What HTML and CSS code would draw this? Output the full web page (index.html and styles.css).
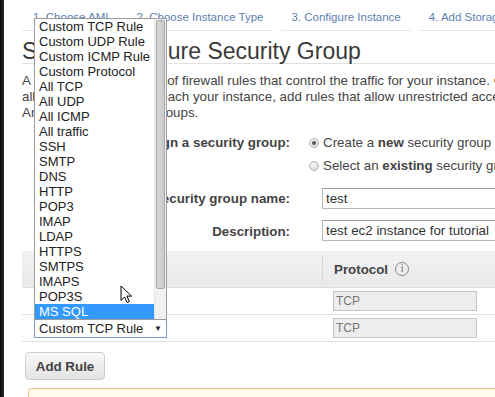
FILE: index.html
```html
<!DOCTYPE html>
<html>
<head>
  <meta charset="utf-8">
  <title>Step 6: Configure Security Group</title>
  <link rel="stylesheet" href="styles.css">
</head>
<body>
  <div class="screen">
    <div class="edge"></div>
    <div class="page">
      <ul class="steps">
        <li>1. Choose AMI</li>
        <li>2. Choose Instance Type</li>
        <li>3. Configure Instance</li>
        <li>4. Add Storage</li>
        <li>5. Tag Instance</li>
      </ul>

      <h1>Step 6: Configure Security Group</h1>

      <p class="intro">
        <span>A security group is a set of firewall rules that control the traffic for your instance. On this page, you can add rules to allow specific traffic to reach your instance. For example, if you want to set up a web server and</span>
        <span>allow Internet traffic to reach your instance, add rules that allow unrestricted access to the HTTP and HTTPS ports. You can create a new security group or select from an existing one below.</span>
        <span>Amazon EC2 security groups.</span>
      </p>

      <div class="form">
        <div class="label top">Assign a security group:</div>
        <div class="radios">
          <div class="radio"><span class="dot checked"></span><span>Create a <b>new</b> security group</span></div>
          <div class="radio"><span class="dot"></span><span>Select an <b>existing</b> security group</span></div>
        </div>
        <div class="label">Security group name:</div>
        <div class="text">test</div>
        <div class="label">Description:</div>
        <div class="text">test ec2 instance for tutorial</div>
      </div>

      <div class="rules">
        <div class="row head">
          <div class="cell type">Type</div>
          <div class="cell proto">Protocol <span class="info">i</span></div>
        </div>
        <div class="row">
          <div class="cell type"><div class="select">Custom TCP Rule<span class="arrow">&#9660;</span></div></div>
          <div class="cell proto"><div class="ro">TCP</div></div>
        </div>
        <div class="row">
          <div class="cell type">
            <div class="select">Custom TCP Rule<span class="arrow">&#9660;</span>
              <div class="list">
                <div class="opts">
                  <div class="opt">Custom TCP Rule</div>
                  <div class="opt">Custom UDP Rule</div>
                  <div class="opt">Custom ICMP Rule</div>
                  <div class="opt">Custom Protocol</div>
                  <div class="opt">All TCP</div>
                  <div class="opt">All UDP</div>
                  <div class="opt">All ICMP</div>
                  <div class="opt">All traffic</div>
                  <div class="opt">SSH</div>
                  <div class="opt">SMTP</div>
                  <div class="opt">DNS</div>
                  <div class="opt">HTTP</div>
                  <div class="opt">POP3</div>
                  <div class="opt">IMAP</div>
                  <div class="opt">LDAP</div>
                  <div class="opt">HTTPS</div>
                  <div class="opt">SMTPS</div>
                  <div class="opt">IMAPS</div>
                  <div class="opt">POP3S</div>
                  <div class="opt selected">MS SQL</div>
                </div>
                <div class="scroll"><div class="thumb"></div></div>
              </div>
            </div>
          </div>
          <div class="cell proto"><div class="ro">TCP</div></div>
        </div>
      </div>

      <button class="add">Add Rule</button>
      <div class="warning"></div>
    </div>

    <svg class="cursor" width="13" height="19" viewBox="0 0 13 19">
      <path d="M1 1 L1 15.5 L4.6 12 L7.2 17.6 L9.4 16.6 L6.9 11.1 L11.6 11.1 Z" fill="#fff" stroke="#000" stroke-width="1" stroke-linejoin="round"/>
    </svg>
  </div>
</body>
</html>
```

FILE: styles.css
```css
html, body {
  margin: 0;
  padding: 0;
}

body {
  background: #fff;
  color: #444;
  font-family: "Liberation Sans", Arial, sans-serif;
  font-size: 13.33px;
  overflow: hidden;
}

* {
  box-sizing: border-box;
}

.screen {
  display: flex;
  height: 397px;
  position: relative;
  width: 495px;
}

.edge {
  background: linear-gradient(to right, #0c0c0c, #2a2a2a);
  flex: 0 0 4px;
}

.page {
  flex: 1;
  overflow: hidden;
  padding-left: 18px;
}

.steps {
  display: flex;
  list-style: none;
  margin: 0;
  padding: 0;
  white-space: nowrap;
}

.steps li {
  border-bottom: 1px solid #e6e6e6;
  color: #5d80b0;
  font-size: 11.5px;
  line-height: 13px;
  margin-right: 8px;
  padding: 11px 10px 6px 10px;
}

.steps li:first-child {
  padding-left: 11px;
}

h1 {
  border-bottom: 1px solid #e2e2e2;
  color: #3a3a3a;
  font-size: 23px;
  font-weight: normal;
  line-height: 23px;
  margin: 9px 0 0;
  white-space: nowrap;
}

.intro {
  line-height: 16px;
  margin: 9px 0 0;
  white-space: nowrap;
}

.intro span {
  display: block;
}

.form {
  align-items: center;
  display: grid;
  grid-template-columns: 268px 1fr;
  column-gap: 19px;
  margin-top: 10px;
  row-gap: 11px;
}

.label {
  font-weight: bold;
  text-align: right;
  white-space: nowrap;
}

.label.top {
  align-self: start;
  line-height: 23px;
}

.radio {
  align-items: center;
  display: flex;
  height: 23px;
  white-space: nowrap;
}

.dot {
  background: radial-gradient(circle at 40% 35%, #fafafa, #cfcfcf);
  border: 1px solid #b5b5b5;
  border-radius: 50%;
  flex: 0 0 10px;
  height: 10px;
  margin-right: 4px;
  position: relative;
}

.dot.checked::after {
  background: #555;
  border-radius: 50%;
  content: "";
  height: 4px;
  left: 2px;
  position: absolute;
  top: 2px;
  width: 4px;
}

.text {
  border: 1px solid #b9b9b9;
  border-top-color: #9a9a9a;
  color: #333;
  height: 21px;
  line-height: 19px;
  margin-left: 13px;
  padding: 0 3px;
  white-space: nowrap;
  width: 260px;
}

.form .text + .label {
  margin-top: 1px;
}

.rules {
  margin-top: 10px;
  width: 700px;
}

.row {
  border-bottom: 1px solid #e3e3e3;
  display: flex;
  height: 27px;
}

.row.head {
  background: linear-gradient(#f2f2f2, #e9e9e9);
  border-bottom-color: #dcdcdc;
  font-weight: bold;
  height: 37px;
}

.cell {
  align-items: center;
  display: flex;
}

.cell.type {
  padding-left: 12px;
  width: 300px;
}

.cell.proto {
  padding-left: 11px;
  width: 170px;
}

.row.head .cell.proto {
  border-left: 1px solid #d6d6d6;
  margin: 5px 0;
}

.info {
  border: 1px solid #888;
  border-radius: 50%;
  color: #666;
  font-size: 10px;
  font-weight: normal;
  height: 14px;
  line-height: 12px;
  margin-left: 7px;
  text-align: center;
  width: 14px;
}

.ro {
  background: #ededed;
  border: 1px solid #c6c6c6;
  color: #777;
  font-size: 12px;
  height: 20px;
  line-height: 18px;
  padding-left: 2px;
  width: 144px;
}

.select {
  background: #fff;
  border: 1px solid #7d9bd0;
  color: #222;
  font-size: 13px;
  height: 19px;
  line-height: 17px;
  padding-left: 4px;
  position: relative;
  white-space: nowrap;
  width: 133px;
}

.arrow {
  font-size: 8px;
  position: absolute;
  right: 4px;
  top: 0;
}

/* open dropdown list above the second rule */
.list {
  background: #fff;
  border: 1px solid #9c9c9c;
  bottom: 100%;
  display: flex;
  height: 302px;
  left: -1px;
  position: absolute;
  width: 133px;
}

.opts {
  flex: 1;
}

.opt {
  color: #222;
  height: 15px;
  line-height: 15px;
  padding-left: 4px;
}

.opt.selected {
  background: #3399ff;
  color: #fff;
}

.scroll {
  background: #f1f1f1;
  border-left: 1px solid #e4e4e4;
  flex: 0 0 12px;
  padding: 1px;
}

.thumb {
  background: linear-gradient(to right, #dadada, #c9c9c9);
  border: 1px solid #a9a9a9;
  border-radius: 2px;
  height: 269px;
}

.add {
  background: linear-gradient(#f8f8f8, #e3e3e3);
  border: 1px solid #cdcdcd;
  border-radius: 4px;
  color: #444;
  display: block;
  font-family: "Liberation Sans", Arial, sans-serif;
  font-size: 13.33px;
  font-weight: bold;
  height: 28px;
  margin: 10px 0 0 3px;
  padding: 0;
  width: 80px;
}

.warning {
  background: #fffbea;
  border: 1px solid #e6c47e;
  border-radius: 3px;
  height: 40px;
  margin: 8px 0 0 6px;
  width: 500px;
}

.cursor {
  left: 120px;
  position: absolute;
  top: 285px;
}
```
